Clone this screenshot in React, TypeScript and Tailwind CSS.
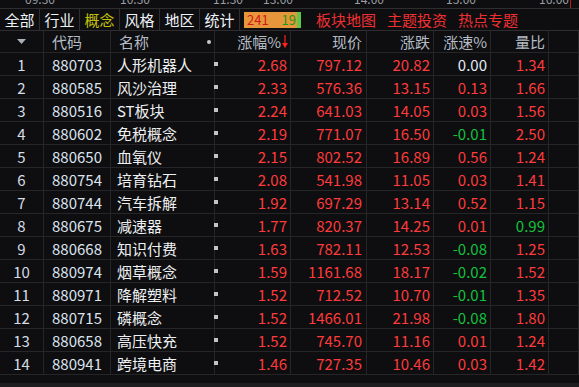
const rows: [number, string, string, string, string, string, string, string][] = [
  [1, '880703', '人形机器人', '2.68', '797.12', '20.82', '0.00', '1.34'],
  [2, '880585', '风沙治理', '2.33', '576.36', '13.15', '0.13', '1.66'],
  [3, '880516', 'ST板块', '2.24', '641.03', '14.05', '0.03', '1.56'],
  [4, '880602', '免税概念', '2.19', '771.07', '16.50', '-0.01', '2.50'],
  [5, '880650', '血氧仪', '2.15', '802.52', '16.89', '0.56', '1.24'],
  [6, '880754', '培育钻石', '2.08', '541.98', '11.05', '0.03', '1.41'],
  [7, '880744', '汽车拆解', '1.92', '697.29', '13.14', '0.52', '1.15'],
  [8, '880675', '减速器', '1.77', '820.37', '14.25', '0.01', '0.99'],
  [9, '880668', '知识付费', '1.63', '782.11', '12.53', '-0.08', '1.25'],
  [10, '880974', '烟草概念', '1.59', '1161.68', '18.17', '-0.02', '1.52'],
  [11, '880971', '降解塑料', '1.52', '712.52', '10.70', '-0.01', '1.35'],
  [12, '880715', '磷概念', '1.52', '1466.01', '21.98', '-0.08', '1.80'],
  [13, '880658', '高压快充', '1.52', '745.70', '11.16', '0.01', '1.24'],
  [14, '880941', '跨境电商', '1.46', '727.35', '10.46', '0.03', '1.42'],
];

const ticks = [
  { t: '09:30', x: 'left-[25px]' },
  { t: '10:30', x: 'left-[120px]' },
  { t: '11:30', x: 'left-[213px]' },
  { t: '13:00', x: 'left-[263px]' },
  { t: '14:00', x: 'left-[354px]' },
  { t: '15:00', x: 'left-[446px]' },
  { t: '16:00', x: 'left-[539px]' },
];

const tabs = ['全部', '行业', '概念', '风格', '地区', '统计'];

const grid = 'grid grid-cols-[44px_67px_104px_76px_76px_67px_57px_58px_30px]';
const cell = 'border-r border-[#262628] flex items-center';

function tone(v: string, base = 'text-[#ff3b3b]') {
  if (v.startsWith('-')) return 'text-[#12c23c]';
  if (v === '0.00') return 'text-[#e4ecf4]';
  return base;
}

export default function App() {
  return (
    <div className="w-[579px] h-[387px] bg-[#0e0e10] overflow-hidden flex flex-col text-[15px] leading-none" style={{ fontFamily: '"Noto Sans CJK SC", "Noto Sans", sans-serif' }}>
      {/* time axis, clipped */}
      <div className="relative h-[9px] shrink-0 overflow-hidden border-b border-[#2e2e30]">
        {ticks.map((k) => (
          <span key={k.t} className={`absolute top-[-7px] text-[12px] text-[#9a9ea4] ${k.x}`}>{k.t}</span>
        ))}
        <div className="absolute left-[570px] top-0 h-full w-px bg-[#c01818]" />
      </div>

      {/* tabs */}
      <div className="h-[22px] shrink-0 flex items-center border-b border-[#2e2e30]">
        {tabs.map((t) => (
          <div key={t} className={`w-[40px] h-full flex items-center justify-center border-r border-[#2e2e30] ${t === '概念' ? 'text-[#c4c40a]' : 'text-[#eef2f6]'}`}>
            {t}
          </div>
        ))}
        <div className="ml-[4px] w-[57px] h-[16px] flex bg-[#e8963c] text-[13px]">
          <div className="flex-1 flex items-center justify-between pl-[3px] pr-[1px]">
            <span className="text-[#d01818]">241</span>
            <span className="text-[#1a9a1a]">19</span>
          </div>
          <div className="w-[4px] bg-[#5cc84c]" />
        </div>
        <div className="ml-[15px] flex gap-[11px] text-[#f03030]">
          <span>板块地图</span>
          <span>主题投资</span>
          <span>热点专题</span>
        </div>
      </div>

      {/* header */}
      <div className={`${grid} h-[22px] shrink-0 border-b border-[#262628] text-[#b4bcc6]`}>
        <div className={`${cell} justify-center`}>
          <svg width="9" height="5" viewBox="0 0 9 5"><path d="M0 0h9L4.5 5z" fill="#a8b0b8" /></svg>
        </div>
        <div className={`${cell} pl-[8px]`}>代码</div>
        <div className={`${cell} pl-[8px] justify-between pr-[3px]`}>
          <span>名称</span>
          <span className="w-[4px] h-[4px] rounded-full bg-[#c8c8c8]" />
        </div>
        <div className={`${cell} justify-end pr-[2px]`}>
          <span>涨幅%</span>
          <svg width="6" height="13" viewBox="0 0 6 13" className="ml-[1px]">
            <path d="M3 0v10" stroke="#ff2020" strokeWidth="1.2" />
            <path d="M0 8l3 5 3-5z" fill="#ff2020" />
          </svg>
        </div>
        <div className={`${cell} justify-end pr-[4px]`}>现价</div>
        <div className={`${cell} justify-end pr-[3px]`}>涨跌</div>
        <div className={`${cell} justify-end pr-[3px]`}>涨速%</div>
        <div className={`${cell} justify-end pr-[3px]`}>量比</div>
        <div className={cell} />
      </div>

      {/* rows */}
      {rows.map(([n, code, name, pct, price, chg, spd, vol]) => (
        <div key={code} className={`${grid} h-[23px] shrink-0 border-b border-[#262628]`}>
          <div className={`${cell} justify-center text-[#d4dce6]`}>{n}</div>
          <div className={`${cell} pl-[8px] text-[#dce4ee]`}>{code}</div>
          <div className={`${cell} relative pl-[6px] text-[#eef0f2]`}>
            {name}
            <span className="absolute right-[-4px] top-[9px] w-[4px] h-[4px] bg-[#c4c4c4]" />
          </div>
          <div className={`${cell} justify-end pr-[3px] text-[#ff3b3b]`}>{pct}</div>
          <div className={`${cell} justify-end pr-[4px] text-[#ff3b3b]`}>{price}</div>
          <div className={`${cell} justify-end pr-[3px] text-[#ff3b3b]`}>{chg}</div>
          <div className={`${cell} justify-end pr-[3px] ${tone(spd)}`}>{spd}</div>
          <div className={`${cell} justify-end pr-[3px] ${vol === '0.99' ? 'text-[#12c23c]' : 'text-[#ff3b3b]'}`}>{vol}</div>
          <div className={cell} />
        </div>
      ))}

      <div className="flex-1" />
      <div className="h-[4px] shrink-0 bg-[#1e1e20]" />
    </div>
  );
}
